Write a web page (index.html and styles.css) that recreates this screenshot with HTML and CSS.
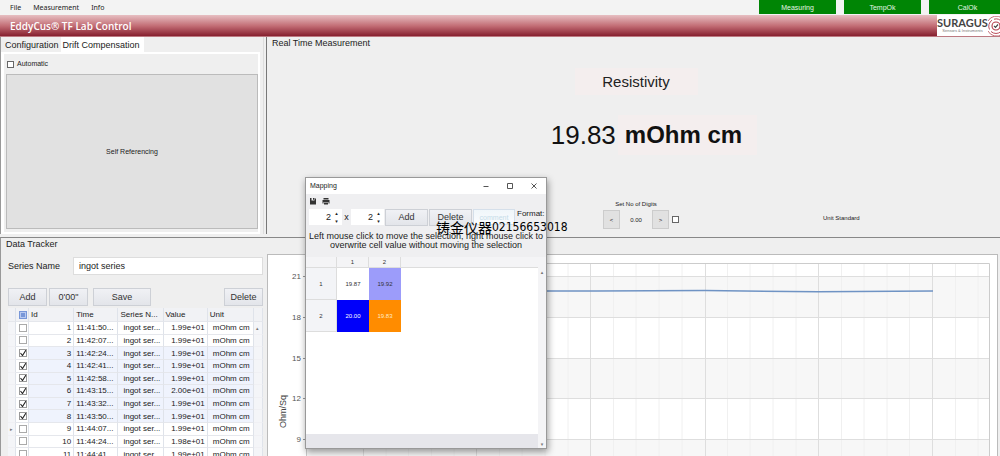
FILE: index.html
```html
<!DOCTYPE html>
<html lang="en">
<head>
<meta charset="utf-8">
<title>EddyCus TF Lab Control</title>
<link rel="stylesheet" href="styles.css">
</head>
<body>
<div class="app">
  <header class="menubar">
    <nav class="menu">
      <button type="button">File</button>
      <button type="button">Measurement</button>
      <button type="button">Info</button>
    </nav>
    <div class="states">
      <span>Measuring</span><span>TempOk</span><span>CalOk</span>
    </div>
  </header>
  <div class="banner">
    <h1>EddyCus® TF Lab Control</h1>
    <div class="brand">
      <div class="brand-text"><b>SURAGUS</b><small>Sensors &amp; Instruments</small></div>
      <svg class="brand-mark" viewBox="0 0 14 20" aria-hidden="true">
        <g fill="none" stroke="#b23a48">
          <circle cx="8" cy="10" r="4" stroke-width="1.100"/>
          <path d="M1.500 13.500A7.300 7.300 0 0 1 4 4.200M6 3.200a7.300 7.300 0 0 1 8 3M3 15.500A7.300 7.300 0 0 0 13 15.500" stroke-width=".9"/>
          <path d="M0 5A9.500 9.500 0 0 1 14 2M0 15A9.500 9.500 0 0 0 14 18.300" stroke-width=".7"/>
        </g>
        <path d="M6 9.800l1.500 1.500L10 8.500" fill="none" stroke="#444" stroke-width="1.200"/>
      </svg>
    </div>
  </div>

  <main>
    <div class="top">
      <section class="config">
        <div class="tabs">
          <button type="button">Configuration</button>
          <button type="button" class="active">Drift Compensation</button>
        </div>
        <div class="tab-page">
          <label class="auto"><input type="checkbox">Automatic</label>
          <button type="button" class="self-ref">Self Referencing</button>
        </div>
      </section>
      <section class="realtime">
        <h2>Real Time Measurement</h2>
        <div class="quantity">Resistivity</div>
        <div class="reading"><span>19.83</span><b>mOhm cm</b></div>
        <div class="settings">
          <div class="digits">
            <div>Set No of Digits</div>
            <div class="stepper">
              <button type="button">&lt;</button>
              <output>0.00</output>
              <button type="button">&gt;</button>
              <input type="checkbox" aria-label="Automatic digits">
            </div>
          </div>
          <div class="standard">Unit Standard</div>
        </div>
      </section>
    </div>

    <div class="bottom">
      <section class="tracker">
        <h2>Data Tracker</h2>
        <div class="series">
          <label for="series">Series Name</label>
          <input id="series" type="text" value="ingot series">
        </div>
        <div class="actions">
          <button type="button" class="add">Add</button>
          <button type="button" class="zero">0'00"</button>
          <button type="button" class="save">Save</button>
          <button type="button" class="del">Delete</button>
        </div>
        <table class="data">
          <colgroup><col class="c-mark"><col class="c-check"><col class="c-id"><col class="c-time"><col class="c-series"><col class="c-value"><col class="c-unit"><col class="c-scroll"></colgroup>
          <thead><tr><th></th><th><input type="checkbox" class="all" aria-label="Select all"></th><th>Id</th><th>Time</th><th>Series N...</th><th>Value</th><th>Unit</th><th></th></tr></thead>
          <tbody>
            <tr><td></td><td><input type="checkbox" aria-label="Row 1"></td><td>1</td><td>11:41:50...</td><td>ingot ser...</td><td>1.99e+01</td><td>mOhm cm</td><td>▴</td></tr>
            <tr><td></td><td><input type="checkbox" aria-label="Row 2"></td><td>2</td><td>11:42:07...</td><td>ingot ser...</td><td>1.99e+01</td><td>mOhm cm</td><td></td></tr>
            <tr class="on"><td></td><td><input type="checkbox" checked aria-label="Row 3"></td><td>3</td><td>11:42:24...</td><td>ingot ser...</td><td>1.99e+01</td><td>mOhm cm</td><td></td></tr>
            <tr class="on"><td></td><td><input type="checkbox" checked aria-label="Row 4"></td><td>4</td><td>11:42:41...</td><td>ingot ser...</td><td>1.99e+01</td><td>mOhm cm</td><td></td></tr>
            <tr class="on"><td></td><td><input type="checkbox" checked aria-label="Row 5"></td><td>5</td><td>11:42:58...</td><td>ingot ser...</td><td>1.99e+01</td><td>mOhm cm</td><td></td></tr>
            <tr class="on"><td></td><td><input type="checkbox" checked aria-label="Row 6"></td><td>6</td><td>11:43:15...</td><td>ingot ser...</td><td>2.00e+01</td><td>mOhm cm</td><td></td></tr>
            <tr class="on"><td></td><td><input type="checkbox" checked aria-label="Row 7"></td><td>7</td><td>11:43:32...</td><td>ingot ser...</td><td>1.99e+01</td><td>mOhm cm</td><td></td></tr>
            <tr class="on"><td></td><td><input type="checkbox" checked aria-label="Row 8"></td><td>8</td><td>11:43:50...</td><td>ingot ser...</td><td>1.99e+01</td><td>mOhm cm</td><td></td></tr>
            <tr><td>▸</td><td><input type="checkbox" aria-label="Row 9"></td><td>9</td><td>11:44:07...</td><td>ingot ser...</td><td>1.99e+01</td><td>mOhm cm</td><td></td></tr>
            <tr><td></td><td><input type="checkbox" aria-label="Row 10"></td><td>10</td><td>11:44:24...</td><td>ingot ser...</td><td>1.98e+01</td><td>mOhm cm</td><td></td></tr>
            <tr><td></td><td><input type="checkbox" aria-label="Row 11"></td><td>11</td><td>11:44:41...</td><td>ingot ser...</td><td>1.99e+01</td><td>mOhm cm</td><td></td></tr>
          </tbody>
        </table>
      </section>

      <section class="chart">
        <svg class="axis" viewBox="0 0 38 200">
          <g class="ticks" text-anchor="end"><text x="33" y="16">21</text><text x="33" y="57">18</text><text x="33" y="98">15</text><text x="33" y="138">12</text><text x="33" y="179">9</text></g>
          <path d="M35 13.500h3M35 54.500h3M35 95.500h3M35 135.500h3M35 176.500h3" stroke="#999"/>
          <text class="axis-name" transform="translate(18 165) rotate(-90)">Ohm/Sq</text>
        </svg>
        <svg class="plot" viewBox="0 0 684 200" preserveAspectRatio="none">
          <path d="M0 13h684v41H0zM0 95h684v41H0zM0 176h684v24H0z" fill="#f7f7f7"/>
          <path class="minor" d="M80 0v200M102.500 0v200M125.500 0v200M148 0v200M193.500 0v200M216 0v200M239 0v200M262 0v200M307.500 0v200M330 0v200M353 0v200M376 0v200M421.500 0v200M444 0v200M467 0v200M490 0v200M535.500 0v200M558 0v200M581 0v200M603.500 0v200M649.500 0v200M672 0v200"/>
          <path class="major" d="M0 13.500h684M0 54.500h684M0 95.500h684M0 135.500h684M0 176.500h684M57.500 0v200M170.500 0v200M284.500 0v200M399.500 0v200M512.500 0v200M626.500 0v200"/>
          <path class="frame" d="M.5 200V.5H683.500V200"/>
          <path class="trace" d="M60 28H290L399 27.500L512 28.800L627 28"/>
        </svg>
      </section>
    </div>
  </main>

  <div class="dialog" role="dialog" aria-label="Mapping">
    <div class="title">
      <span>Mapping</span>
      <button type="button" aria-label="Minimize"><svg viewBox="0 0 8 8"><path d="M1.500 4.500h5"/></svg></button>
      <button type="button" aria-label="Maximize"><svg viewBox="0 0 8 8"><path d="M1.500 1.500h5v5h-5z"/></svg></button>
      <button type="button" aria-label="Close"><svg viewBox="0 0 8 8"><path d="M1.500 1.500l5 5M6.500 1.500l-5 5"/></svg></button>
    </div>
    <div class="tools">
      <button type="button" aria-label="Save"><svg viewBox="0 0 8 8"><path d="M1 1h1.500v2.500h3V1H6l1 1v5.500H1zM4 1h1v1.800H4z"/></svg></button>
      <button type="button" aria-label="Print"><svg viewBox="0 0 8 8"><path fill-rule="evenodd" d="M1.500 1h5v1.500h-5zM.5 3h7v3.500h-1V5h-5v1.500h-1zM2 5.500h4v2H2z"/></svg></button>
    </div>
    <div class="form">
      <div class="spin"><input type="text" value="2" aria-label="Columns"><span><i>▴</i><i>▾</i></span></div>
      <span class="times">x</span>
      <div class="spin"><input type="text" value="2" aria-label="Rows"><span><i>▴</i><i>▾</i></span></div>
      <button type="button">Add</button>
      <button type="button">Delete</button>
      <input type="text" class="comment" placeholder="comment" aria-label="Comment">
      <span class="format">Format:</span>
    </div>
    <p>Left mouse click to move the selection, right mouse click to overwrite cell value without moving the selection</p>
    <div class="map">
      <table>
        <thead><tr><th></th><th>1</th><th>2</th><th></th></tr></thead>
        <tbody>
          <tr><th>1</th><td>19.87</td><td class="lilac">19.92</td><td></td></tr>
          <tr><th>2</th><td class="blue">20.00</td><td class="orange">19.83</td><td></td></tr>
        </tbody>
      </table>
      <div class="scroll"><span>▴</span><span>▾</span></div>
    </div>
  </div>
  <div class="watermark">铸金仪器<span>02156653018</span></div>
</div>
</body>
</html>
```
FILE: styles.css
```css
* { box-sizing: border-box; }
body { margin: 0; background: #efefef; color: #222; font: 9px/12px "Liberation Sans", Arial, sans-serif; }
button, input { font: inherit; color: inherit; margin: 0; padding: 0; border-radius: 0; }
h1, h2, p { margin: 0; font-weight: normal; }
h2 { font-size: 9px; }

.app { position: relative; display: flex; flex-direction: column; height: 100vh; overflow: hidden; }

.menubar { display: flex; justify-content: space-between; height: 15px; background: #f3f3f3; flex: none; }
.menu { display: flex; gap: 12px; padding-left: 10px; }
.menu button { border: 0; background: none; font: 7px/15px "Noto Sans", sans-serif; }
.states { display: flex; gap: 8px; margin-right: -6px; }
.states span { width: 77px; height: 14px; background: #008505; color: #e4f5e4; font-size: 7px; line-height: 16px; text-align: center; }

.banner { display: flex; justify-content: space-between; align-items: center; height: 22px; flex: none; padding-left: 10px; background: linear-gradient(#e7bfc2, #c26c74 50%, #882231 94%, #dcaeb2); }
.banner h1 { color: #fff; font: 600 10px/20px "Open Sans", sans-serif; }
.brand { display: flex; align-items: center; width: 63px; height: 21px; background: #fff; overflow: hidden; align-self: flex-start; }
.brand-text { display: flex; flex-direction: column; width: 51px; flex: none; color: #444; }
.brand-text b { font: bold 11px/10px Lato, sans-serif; }
.brand-text small { font-size: 4px; line-height: 5px; text-align: center; color: #777; }
.brand-mark { width: 14px; height: 20px; flex: none; }

main { flex: 1; display: flex; flex-direction: column; min-height: 0; }
.top { display: grid; grid-template-columns: 264px 1fr; gap: 2px; flex: none; height: 197px; }
.config { border-left: 1px solid #999; display: flex; flex-direction: column; border-right: 1px solid #ddd; }
.tabs { display: flex; height: 15px; flex: none; }
.tabs button { border: 0; background: none; padding: 0 4px; }
.tabs button:first-child { padding: 0 2px 0 4px; }
.tabs .active { background: #fff; padding: 0 4px 0 2px; }
.tab-page { flex: 1; display: flex; flex-direction: column; border: 2px solid #fff; border-left-width: 3px; margin-right: 3px; padding: 0 0 3px 2px; }
.auto { display: flex; align-items: center; gap: 3px; height: 20px; font-size: 7px; padding-left: 1px; }
input[type="checkbox"] { appearance: none; display: block; width: 7px; height: 7px; border: 1px solid #666; background: #fff; }
.self-ref { flex: 1; border: 1px solid #bbb; background: #e1e1e1; font-size: 7px; }

.realtime { border-left: 1px solid #777; padding-left: 5px; display: flex; flex-direction: column; }
.quantity { align-self: center; width: 123px; margin-top: 19px; background: #f4eeee; text-align: center; font-size: 15px; line-height: 27px; }
.reading { display: flex; justify-content: center; align-items: center; gap: 2px; margin-top: 20px; padding-left: 36px; color: #111; font-size: 26px; line-height: 40px; }
.reading b { font-size: 24px; padding: 0 15px 0 7px; background: #f4eeee; }
.settings { display: grid; grid-template-columns: 1fr 176px 1fr; margin-top: 43px; font-size: 6px; align-items: end; }
.digits { grid-column: 2; text-align: center; }
.stepper { display: grid; grid-template-columns: 17px 32px 17px 10px; justify-content: center; align-items: center; justify-items: stretch; padding-left: 10px; }
.stepper button { height: 19px; border: 1px solid #ccc; background: #e1e1e1; }
.stepper input { justify-self: end; }
.standard { padding: 0 0 5px 99px; }

.bottom { flex: 1; display: grid; grid-template-columns: 262px 1fr; gap: 4px; min-height: 0; margin-top: 3px; border-top: 1px solid #888; border-left: 1px solid #999; }
.tracker { padding-left: 7px; }
.tracker h2 { margin-left: -2px; }
.series { display: flex; align-items: center; margin-top: 7px; }
.series label { width: 65px; }
.series input { flex: 1; width: 0; height: 18px; border: 1px solid #ddd; background: #fff; padding-left: 5px; }
.actions { display: flex; gap: 2px; margin: 13px 0 2px; }
.actions button, .form button { height: 18px; border: 1px solid #cdd0d6; background: linear-gradient(#f0f1f5, #e3e5ea); color: #333; }
.actions .add, .actions .zero, .actions .del { width: 39px; }
.actions .save { width: 58px; margin-left: 3px; }
.actions .del { margin-left: auto; }

.data { table-layout: fixed; width: 100%; height: 153px; border-collapse: separate; border-spacing: 0; background: #fff; font-size: 8px; line-height: 11px; }
.c-mark { width: 8px; }
.c-check { width: 13px; }
.c-id { width: 45px; }
.c-time { width: 44px; }
.c-series { width: 45px; }
.c-value { width: 44px; }
.c-unit { width: 46px; }
.c-scroll { width: 9px; }
.data th, .data td { padding: 0 2px; border-right: 1px solid #dfe3ea; border-bottom: 1px solid #e5e7ec; white-space: nowrap; overflow: hidden; }
.data th { height: 14px; background: #f1f2f5; font-weight: normal; text-align: left; }
.data td:nth-child(3), .data td:nth-child(6) { text-align: right; }
.data td:nth-child(5), .data td:nth-child(7) { padding-left: 5px; padding-right: 0; }
.data td:first-child, .data td:last-child { background: #f4f5f8; padding: 0 2px; color: #777; border-bottom-color: #f0f0f4; font: 5px/8px "DejaVu Sans", sans-serif; }
.data .on td:nth-child(n+3):not(:last-child) { background: #eff3fd; }
.data input[type="checkbox"] { width: 8px; height: 8px; border-color: #aaa; margin-left: 1px; }
.data input[type="checkbox"]:checked { border-color: #999; background: url("data:image/svg+xml,%3Csvg xmlns='http://www.w3.org/2000/svg' viewBox='0 0 8 8'%3E%3Cpath d='M1.500 4l2 2.500L7 1' fill='none' stroke='%23222' stroke-width='1.100'/%3E%3C/svg%3E") center / 8px no-repeat #fff; }
.data input[type="checkbox"].all { border-color: #7897d8; background: #7897d8; box-shadow: inset 0 0 0 1px #b9caf0; }

.chart { display: flex; margin: 16px 2px 0 0; padding-top: 8px; padding-right: 7px; border: 1px solid #bbb; border-bottom: 0; background: #fff; overflow: hidden; }
.axis { width: 38px; height: 200px; flex: none; }
.plot { flex: 1; min-width: 0; height: 200px; }
.ticks { font-size: 8px; fill: #555; }
.axis-name { font-size: 9px; fill: #444; }
.minor { stroke: #f0f0f0; fill: none; }
.major { stroke: #dedede; fill: none; }
.frame { stroke: #ccc; fill: none; }
.trace { stroke: #6f93c4; stroke-width: 1.500px; fill: none; }

.dialog { position: absolute; left: 305px; top: 177px; width: 242px; height: 272px; display: flex; flex-direction: column; border: 1px solid #999; background: #efeff1; box-shadow: 1px 3px 7px rgba(0, 0, 0, .4); }
.title { display: flex; height: 16px; background: #fff; font-size: 7px; line-height: 16px; padding-left: 4px; }
.title span { margin-right: auto; }
.title button { width: 24px; border: 0; background: none; display: grid; place-items: center; }
.title svg { width: 8px; height: 8px; fill: none; stroke: #555; }
.tools { display: flex; gap: 5px; height: 14px; padding-left: 3px; align-items: center; }
.tools button { border: 0; background: none; height: 8px; }
.tools svg { display: block; width: 8px; height: 8px; fill: #333; }
.form { display: flex; height: 18px; padding-left: 3px; gap: 1px; align-items: center; }
.form button { width: 43px; height: 17px; }
.spin { display: flex; width: 33px; height: 16px; background: #fff; }
.spin input { width: 22px; border: 0; background: none; text-align: right; font-size: 9px; }
.spin span { width: 11px; display: grid; text-align: center; }
.spin i { font: normal 5px/8px "DejaVu Sans", sans-serif; }
.times { width: 7px; text-align: center; }
.comment { width: 42px; height: 16px; border: 1px solid #d5dfea; background: linear-gradient(#f0f6fa, #fafcfe); text-align: center; font-size: 7px; }
.comment::placeholder { color: #c5dce8; opacity: 1; }
.format { align-self: flex-start; white-space: nowrap; font-size: 8px; margin-left: 1px; line-height: 11px; }
.dialog p { padding: 6px 2px 0; text-align: center; line-height: 9px; height: 31px; }
.map { flex: 1; display: flex; background: #fff; border-bottom: 14px solid #e6e6eb; }
.map table { flex: 1; border-collapse: separate; border-spacing: 0; table-layout: fixed; align-self: flex-start; font-size: 6px; line-height: 10px; color: #333; }
.map th, .map td { padding: 0; width: 32px; height: 32px; text-align: center; font-weight: normal; }
.map th:first-child { width: 31px; }
.map th { background: #f3f4f7; border-right: 1px solid #ddd; border-bottom: 1px solid #ddd; }
.map thead th { height: 11px; background: #f4f4f6; }
.map th:last-child, .map td:last-child { width: auto; }
.map thead th:last-child { border-right: 0; }
.map .lilac { background: #9c9cfa; }
.map .blue { background: #0000fa; color: #fff; }
.map .orange { background: #ff8c00; color: #ffe9c8; }
.scroll { width: 8px; background: #f4f4f6; color: #777; display: flex; flex-direction: column; justify-content: space-between; text-align: center; padding-top: 11px; font: 5px/8px "DejaVu Sans", sans-serif; margin-bottom: -14px; }

.watermark { position: absolute; left: 436px; top: 218px; display: flex; align-items: center; color: #000; font: 14px/18px "Noto Sans CJK SC", sans-serif; white-space: nowrap; }
.watermark span { font: 12px/18px "DejaVu Sans Condensed", "DejaVu Sans", sans-serif; }
```
